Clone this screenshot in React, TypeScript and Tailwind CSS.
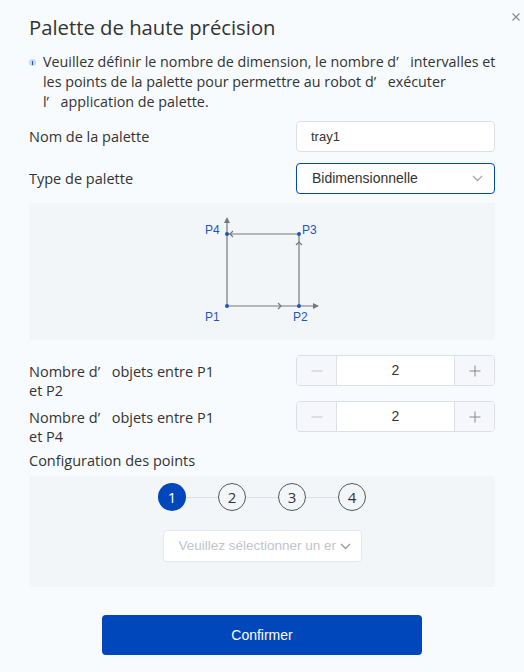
import React from "react";

const Apos = () => <span className="inline-block w-[14px]">’</span>;

function Stepper({ value }: { value: number }) {
  return (
    <div className="flex h-[31px] w-[199px] shrink-0 overflow-hidden rounded-[4px] border border-[#dcdfe6] bg-white">
      <div className="flex w-[40px] items-center justify-center border-r border-[#dcdfe6] bg-[#f5f7fa]">
        <svg width="12" height="12" viewBox="0 0 12 12"><path d="M0.5 6h11" stroke="#c0c4cc" strokeWidth="1" /></svg>
      </div>
      <div className="flex flex-1 items-center justify-center text-[14px] text-[#333]" style={{ fontFamily: '"Liberation Sans", Arial, sans-serif' }}>{value}</div>
      <div className="flex w-[40px] items-center justify-center border-l border-[#dcdfe6] bg-[#f5f7fa]">
        <svg width="12" height="12" viewBox="0 0 12 12"><path d="M0.5 6h11M6 0.5v11" stroke="#888" strokeWidth="1" /></svg>
      </div>
    </div>
  );
}

function Chevron({ color = "#999" }: { color?: string }) {
  return (
    <svg width="11" height="7" viewBox="0 0 11 7"><path d="M1 1l4.5 4.5L10 1" fill="none" stroke={color} strokeWidth="1.3" /></svg>
  );
}

function Diagram() {
  return (
    <svg width="466" height="137" viewBox="0 0 466 137" className="block">
      <g stroke="#777" strokeWidth="1.2" fill="none">
        <path d="M198 103V18" />
        <path d="M270 103V31" />
        <path d="M270 31H198" />
        <path d="M198 103h88" />
        <path d="M267 42l3-3 3 3" />
        <path d="M204 28l-3 3 3 3" />
        <path d="M249 100l3 3-3 3" />
      </g>
      <path d="M195 20l3-6 3 6z" fill="#777" />
      <path d="M284 100l6 3-6 3z" fill="#777" />
      <g fill="#1a56c4">
        <circle cx="198" cy="103" r="2" />
        <circle cx="270" cy="103" r="2" />
        <circle cx="270" cy="31" r="2" />
        <circle cx="198" cy="31" r="2" />
      </g>
      <g fill="#1a56c4" fontSize="12" fontFamily="Liberation Sans, Arial, sans-serif">
        <text x="176" y="31">P4</text>
        <text x="273" y="31">P3</text>
        <text x="176" y="118">P1</text>
        <text x="264" y="118">P2</text>
      </g>
    </svg>
  );
}

export default function App() {
  return (
    <div
      className="relative h-[672px] w-[524px] overflow-hidden bg-[#f7fbfe] px-[29px] text-[#333]"
      style={{ fontFamily: '"Open Sans", "Liberation Sans", Arial, sans-serif' }}
    >
      <div className="absolute right-[4px] top-[13px] leading-none">
        <svg width="8" height="8" viewBox="0 0 8 8"><path d="M0.5 0.5l7 7M7.5 0.5l-7 7" stroke="#888" strokeWidth="1.1" /></svg>
      </div>
      <div className="pt-[12px] text-[20.3px] leading-[30px] text-[#333]">Palette de haute précision</div>
      <div className="mt-[10px] flex leading-[20px] text-[#333]">
        <div className="mr-[7px] mt-[7px] flex h-[7px] w-[7px] shrink-0 items-center justify-center rounded-full bg-[#c9d8f2]">
          <div className="h-[4px] w-[1.5px] bg-[#1a56c4]" />
        </div>
        <div className="whitespace-nowrap text-[14.3px] leading-[20px]">
          Veuillez définir le nombre de dimension, le nombre d<Apos />intervalles et
          <br />
          les points de la palette pour permettre au robot d<Apos />exécuter
          <br />
          l<Apos />application de palette.
        </div>
      </div>

      <div className="mt-[9px] flex items-center justify-between">
        <div className="text-[14.5px]">Nom de la palette</div>
        <div className="flex h-[31px] w-[199px] items-center rounded-[4px] border border-[#dcdfe6] bg-white px-[14px] text-[13px] text-[#333]" style={{ fontFamily: '"Liberation Sans", Arial, sans-serif' }}>
          tray1
        </div>
      </div>
      <div className="mt-[11px] flex items-center justify-between">
        <div className="text-[14.5px]">Type de palette</div>
        <div className="flex h-[31px] w-[199px] items-center justify-between rounded-[4px] border border-[#0047bb] bg-white pl-[15px] pr-[11px] text-[14px] text-[#333]" style={{ fontFamily: '"Liberation Sans", Arial, sans-serif' }}>
          <span>Bidimensionnelle</span>
          <Chevron color="#aaa" />
        </div>
      </div>

      <div className="mt-[9px] h-[137px] bg-[#f3f6f9]">
        <Diagram />
      </div>

      <div className="mt-[15px] flex items-start justify-between">
        <div className="mt-[7px] text-[14.5px] leading-[19px]">Nombre d<Apos />objets entre P1<br />et P2</div>
        <Stepper value={2} />
      </div>
      <div className="mt-px flex items-start justify-between">
        <div className="mt-[7px] text-[14.5px] leading-[19px]">Nombre d<Apos />objets entre P1<br />et P4</div>
        <Stepper value={2} />
      </div>

      <div className="mt-[5px] text-[14.5px] leading-[20px]">Configuration des points</div>
      <div className="mt-[5px] flex h-[111px] flex-col items-center bg-[#f3f6f9] pt-[7px]">
        <div className="flex items-center">
          <div className="flex h-[28px] w-[28px] items-center justify-center rounded-full bg-[#0047bb] text-[15px] text-white">1</div>
          <div className="h-px w-[32px] bg-[#dcdfe6]" />
          <div className="flex h-[28px] w-[28px] items-center justify-center rounded-full border border-[#555] text-[15px] text-[#333]">2</div>
          <div className="h-px w-[32px] bg-[#dcdfe6]" />
          <div className="flex h-[28px] w-[28px] items-center justify-center rounded-full border border-[#555] text-[15px] text-[#333]">3</div>
          <div className="h-px w-[32px] bg-[#dcdfe6]" />
          <div className="flex h-[28px] w-[28px] items-center justify-center rounded-full border border-[#555] text-[15px] text-[#333]">4</div>
        </div>
        <div className="mt-[19px] flex h-[32px] w-[199px] items-center justify-between rounded-[4px] border border-[#e4e7ed] bg-white pl-[15px] pr-[10px] text-[13.5px] text-[#c0c4cc]" style={{ fontFamily: '"Liberation Sans", Arial, sans-serif' }}>
          <span className="w-[157px] overflow-hidden whitespace-nowrap">Veuillez sélectionner un emplacement</span>
          <Chevron color="#999" />
        </div>
      </div>

      <div className="mt-[28px] flex justify-center">
        <div className="flex h-[40px] w-[320px] items-center justify-center rounded-[4px] bg-[#0047bb] text-[14px] text-white" style={{ fontFamily: '"Liberation Sans", Arial, sans-serif' }}>
          Confirmer
        </div>
      </div>
    </div>
  );
}
